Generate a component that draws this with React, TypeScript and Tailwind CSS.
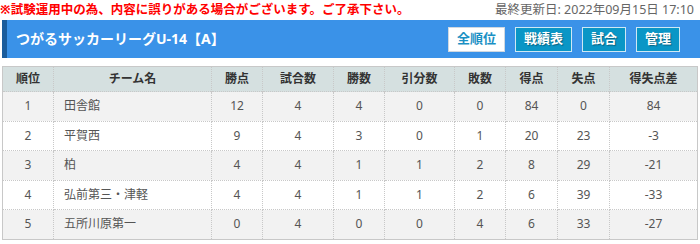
import React from "react";

const rows = [
  ["1", "田舎館", "12", "4", "4", "0", "0", "84", "0", "84"],
  ["2", "平賀西", "9", "4", "3", "0", "1", "20", "23", "-3"],
  ["3", "柏", "4", "4", "1", "1", "2", "8", "29", "-21"],
  ["4", "弘前第三・津軽", "4", "4", "1", "1", "2", "6", "39", "-33"],
  ["5", "五所川原第一", "0", "4", "0", "0", "4", "6", "33", "-27"],
];

const heads = ["順位", "チーム名", "勝点", "試合数", "勝数", "引分数", "敗数", "得点", "失点", "得失点差"];
const widths = [51, 158, 51, 71, 51, 70, 51, 52, 52, 88];

export default function App() {
  return (
    <div
      className="w-[700px] h-[244px] bg-white overflow-hidden"
      style={{ fontFamily: '"Noto Sans", "Noto Sans CJK JP", sans-serif' }}
    >
      <div className="flex items-center justify-between h-[20px] pr-[6px]">
        <span className="text-[12.5px] font-bold text-[#ff0000] leading-none">
          ※試験運用中の為、内容に誤りがある場合がございます。ご了承下さい。
        </span>
        <span className="text-[12.5px] text-[#666] leading-none">最終更新日: 2022年09月15日 17:10</span>
      </div>
      <div className="ml-[2px] h-[38px] bg-[#3a92e8] border-l-[5px] border-[#1a5c9c] flex items-center justify-between pl-[9px] pr-[20px]">
        <span className="text-white font-bold text-[14px] leading-none">つがるサッカーリーグU-14【A】</span>
        <div className="flex gap-[10px]">
          <span className="h-[25px] px-[8px] flex items-center bg-white border border-[#d0d8e0] text-[#1a90c4] font-bold text-[13px]">全順位</span>
          <span className="h-[25px] px-[8px] flex items-center bg-[#0a96c6] border border-[#cfe8f4] text-white font-bold text-[13px] [text-shadow:1px_1px_1px_rgba(0,0,0,0.35)]">戦績表</span>
          <span className="h-[25px] px-[8px] flex items-center bg-[#0a96c6] border border-[#cfe8f4] text-white font-bold text-[13px] [text-shadow:1px_1px_1px_rgba(0,0,0,0.35)]">試合</span>
          <span className="h-[25px] px-[8px] flex items-center bg-[#0a96c6] border border-[#cfe8f4] text-white font-bold text-[13px] [text-shadow:1px_1px_1px_rgba(0,0,0,0.35)]">管理</span>
        </div>
      </div>
      <table className="mt-[8px] ml-[2px] w-[695px] border-collapse border border-[#c8c8c8] table-fixed">
        <colgroup>
          {widths.map((w, i) => (
            <col key={i} style={{ width: w }} />
          ))}
        </colgroup>
        <thead>
          <tr className="bg-[#d5e0e0] h-[25px]">
            {heads.map((h, i) => (
              <th
                key={i}
                className="p-0 text-[12px] font-bold text-[#333] text-center border-l border-dotted border-[#c8c8c8]"
              >
                {h}
              </th>
            ))}
          </tr>
        </thead>
        <tbody>
          {rows.map((r, ri) => (
            <tr key={ri} className={ri % 2 === 0 ? "bg-[#f2f2f2] h-[29.5px]" : "bg-white h-[29.5px]"}>
              {r.map((c, ci) => (
                <td
                  key={ci}
                  className={
                    "p-0 text-[12px] text-[#555] border border-dotted border-[#c8c8c8] " +
                    (ci === 1 ? "text-left pl-[10px]" : "text-center")
                  }
                >
                  {c}
                </td>
              ))}
            </tr>
          ))}
        </tbody>
      </table>
    </div>
  );
}
